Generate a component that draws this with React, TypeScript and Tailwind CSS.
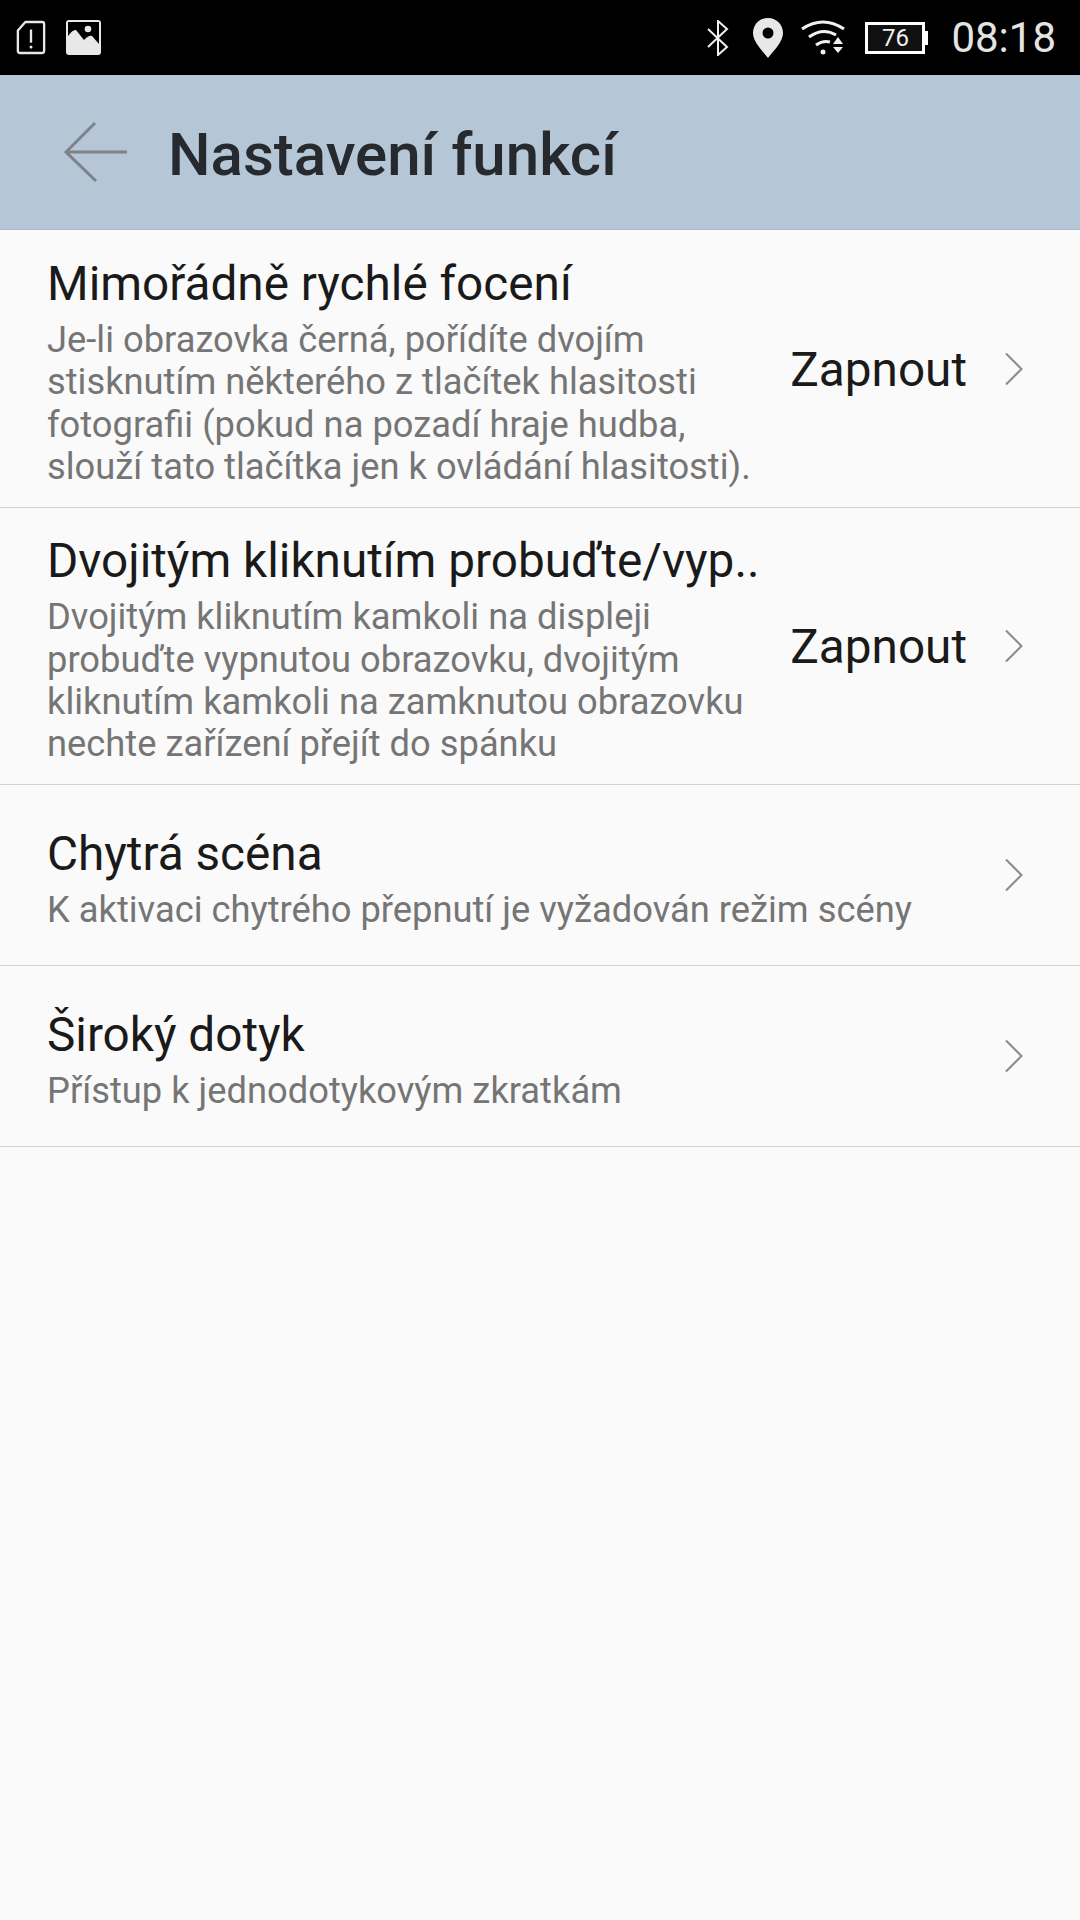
const font = { fontFamily: 'Roboto, sans-serif' }

function Chevron() {
  return (
    <svg width="20" height="36" viewBox="0 0 20 36" fill="none" className="flex-shrink-0">
      <path d="M2 2.5 L17.5 18 L2 33.5" stroke="#8a8a8a" strokeWidth="2" />
    </svg>
  )
}

function StatusBar() {
  return (
    <div className="h-[75px] bg-black flex items-center justify-between pl-4 pr-6">
      <div className="flex items-center gap-[19px]">
        <svg width="30" height="37" viewBox="0 0 32 37" fill="none">
          <path d="M10 2 H28 Q30 2 30 4 V33 Q30 35 28 35 H4 Q2 35 2 33 V11 Z" stroke="#e8e8e8" strokeWidth="2.5" strokeLinejoin="round" />
          <path d="M16 10 V24" stroke="#e8e8e8" strokeWidth="2.5" />
          <circle cx="16" cy="28.5" r="1.6" fill="#e8e8e8" />
        </svg>
        <svg width="37" height="37" viewBox="0 0 37 37">
          <rect x="1" y="1" width="35" height="35" rx="3" fill="#e8e8e8" />
          <rect x="3" y="3" width="31" height="23" fill="#000" />
          <path d="M3 17 Q8 10 11 11 L19 21 Q24 16 27 17 L34 25 V34 H3 Z" fill="#e8e8e8" />
          <circle cx="23" cy="10" r="3.3" fill="#e8e8e8" />
        </svg>
      </div>
      <div className="flex items-center">
        <svg width="24" height="36" viewBox="0 0 24 36" fill="none">
          <path d="M2 9 L21 27 L12 35 V1 L21 9 L2 27" stroke="#f0f0f0" strokeWidth="2" />
        </svg>
        <svg width="32" height="42" viewBox="0 0 32 42" className="ml-[22px]">
          <path fillRule="evenodd" d="M16 1 C7 1 1 8 1 16 C1 25 10 33 16 41 C22 33 31 25 31 16 C31 8 25 1 16 1 Z M16 10.5 A5.5 5.5 0 1 1 16 21.5 A5.5 5.5 0 1 1 16 10.5 Z" fill="#e8e8e8" />
        </svg>
        <svg width="46" height="36" viewBox="0 0 46 36" fill="none" className="ml-[16px]">
          <path d="M2 9 Q23 -5 44 9" stroke="#f0f0f0" strokeWidth="3" />
          <path d="M9 17 Q23 7 36 15" stroke="#f0f0f0" strokeWidth="3" />
          <path d="M16 25 Q23 20 30 22" stroke="#f0f0f0" strokeWidth="3" />
          <circle cx="23" cy="32" r="2.5" fill="#f0f0f0" />
          <path d="M38 17 L43 24 H33 Z M33 27 H43 L38 33 Z" fill="#f0f0f0" />
        </svg>
        <div className="ml-[19px] flex items-center">
          <div className="w-[60px] h-[32px] border-[3px] border-white bg-[#111] flex items-center justify-center text-[#f0f0f0] text-[24px] leading-none">
            76
          </div>
          <div className="w-[3px] h-[14px] bg-white" />
        </div>
        <div className="ml-[23px] text-[42px] leading-none text-[#e4e4e4]">08:18</div>
      </div>
    </div>
  )
}

interface RowProps {
  title: string
  lines: string[]
  value?: string
  height: string
}

function Row({ title, lines, value, height }: RowProps) {
  return (
    <div className={`flex items-center border-b border-[#d4d4d4] pl-[47px] pr-[56px] ${height}`}>
      <div className="flex-1 min-w-0 pt-2">
        <div className="text-[47.7px] leading-[54px] text-[#1a1a1a] whitespace-nowrap mb-2">{title}</div>
        {lines.map(line => (
          <div key={line} className="text-[36.3px] leading-[42.4px] text-[#757575] whitespace-nowrap">{line}</div>
        ))}
      </div>
      {value && <div className="text-[47.7px] leading-[54px] text-[#1a1a1a] mr-[37px] mt-[2px]">{value}</div>}
      <Chevron />
    </div>
  )
}

export default function App() {
  return (
    <div className="w-[1080px] h-[1920px] bg-[#fafafa] overflow-hidden" style={font}>
      <StatusBar />
      <div className="h-[155px] bg-[#b5c6d6] flex items-center pl-[64px] border-b border-[#adbccb]">
        <svg width="64" height="62" viewBox="0 0 64 62" fill="none">
          <path d="M31 2 L2 31 L32 60 M2 31 H63" stroke="#7d8287" strokeWidth="3" />
        </svg>
        <div className="ml-[40px] mt-[5px] text-[60px] font-medium text-[#26292d] leading-none">Nastavení funkcí</div>
      </div>
      <Row
        height="h-[278px]"
        title="Mimořádně rychlé focení"
        value="Zapnout"
        lines={[
          'Je-li obrazovka černá, pořídíte dvojím',
          'stisknutím některého z tlačítek hlasitosti',
          'fotografii (pokud na pozadí hraje hudba,',
          'slouží tato tlačítka jen k ovládání hlasitosti).',
        ]}
      />
      <Row
        height="h-[277px]"
        title="Dvojitým kliknutím probuďte/vyp.."
        value="Zapnout"
        lines={[
          'Dvojitým kliknutím kamkoli na displeji',
          'probuďte vypnutou obrazovku, dvojitým',
          'kliknutím kamkoli na zamknutou obrazovku',
          'nechte zařízení přejít do spánku',
        ]}
      />
      <Row height="h-[181px]" title="Chytrá scéna" lines={['K aktivaci chytrého přepnutí je vyžadován režim scény']} />
      <Row height="h-[181px]" title="Široký dotyk" lines={['Přístup k jednodotykovým zkratkám']} />
    </div>
  )
}
